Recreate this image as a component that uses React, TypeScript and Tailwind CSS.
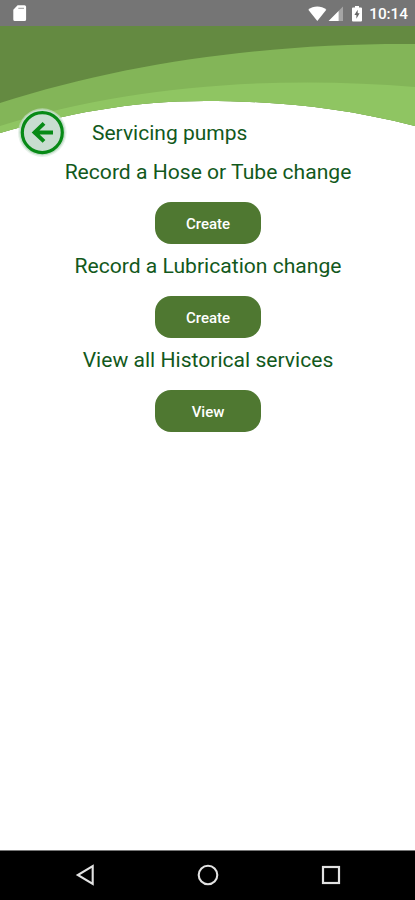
import React from "react";

interface ServiceAction {
  title: string;
  button: string;
}

const actions: ServiceAction[] = [
  { title: "Record a Hose or Tube change", button: "Create" },
  { title: "Record a Lubrication change", button: "Create" },
  { title: "View all Historical services", button: "View" },
];

const StatusBar: React.FC = () => (
  <div className="flex h-[26px] shrink-0 items-center justify-between bg-[#757575] pl-[13px] pr-[7px]">
    <svg width="14" height="18" viewBox="0 0 14 18">
      <path d="M4.6 1.2H11.5a1.6 1.6 0 0 1 1.6 1.6V15.4a1.6 1.6 0 0 1-1.6 1.6H1.9A1.6 1.6 0 0 1 .3 15.4V5.8Z" fill="#fff" />
      <path d="M5.3 4.3H11" fill="none" stroke="#9a9a9a" strokeWidth="1" />
    </svg>
    <div className="flex items-center">
      <svg className="mt-px" width="56" height="18" viewBox="0 0 56 18">
        <path d="M.3 4.7C5.3.4 13.3.4 18.3 4.7L9.3 15.9Z" fill="#fff" />
        <path d="M35 1.5V15.9H20.6Z" fill="#a5a5a5" />
        <path d="M30.6 5.9V15.9H20.6Z" fill="#fff" />
        <path d="M47 1H51V2.4H53a1 1 0 0 1 1 1V15.4a1 1 0 0 1-1 1H45a1 1 0 0 1-1-1V3.4a1 1 0 0 1 1-1H47Z" fill="#fff" />
        <path d="M49.7 4.8V8.3H51.6L48.4 13.8V10H46.4Z" fill="#666" />
      </svg>
      <span className="ml-[5px] mt-[3px] text-[15.3px] font-medium leading-none text-white">10:14</span>
    </div>
  </div>
);

const HeaderWaves: React.FC = () => (
  <svg className="block h-[108px] w-[415px] shrink-0" viewBox="0 26 415 108">
    <path d="M0 26H415V126C340 107 275 101 205 101C130 101 65 114 0 133Z" fill="#648a41" />
    <path d="M0 103C130 61 275 43 415 44V126C340 107 275 101 205 101C130 101 65 114 0 133Z" fill="#83b558" />
    <path d="M0 126C125 86 275 75 415 87V126C340 107 275 101 205 101C130 101 65 114 0 133Z" fill="#8fc562" />
  </svg>
);

const BackButton: React.FC = () => (
  <button type="button" aria-label="Back" className="block h-[50px] w-[50px]">
    <svg width="50" height="50" viewBox="0 0 50 50">
      <circle cx="25.3" cy="24.6" r="24.3" fill="#d5e8d8" opacity="0.55" />
      <circle cx="25.3" cy="24.6" r="23" fill="#c5decb" />
      <circle cx="25.3" cy="24.6" r="20" fill="#c8ddd0" stroke="#078a16" strokeWidth="3.2" />
      <path d="M36 24.4H16.5M27 15.4L17.6 24.4L27 33.4" fill="none" stroke="#078a16" strokeWidth="4" />
    </svg>
  </button>
);

const NavBar: React.FC = () => (
  <div className="flex h-[50px] shrink-0 items-center justify-between border-t border-[#777] bg-black pb-[2px] pl-[75px] pr-[74px]">
    <svg width="20" height="22" viewBox="0 0 20 22" fill="none" stroke="#e2e2e2" strokeWidth="2.1">
      <path d="M17.7 2V20L2.8 11Z" />
    </svg>
    <svg width="22" height="22" viewBox="0 0 22 22" fill="none" stroke="#e2e2e2" strokeWidth="2.1">
      <circle cx="11" cy="11" r="9.3" />
    </svg>
    <svg width="20" height="22" viewBox="0 0 20 22" fill="none" stroke="#e2e2e2" strokeWidth="2.2">
      <rect x="2" y="3" width="16" height="16" />
    </svg>
  </div>
);

export default function App() {
  return (
    <div className="flex h-[900px] w-[415px] flex-col overflow-hidden bg-white font-[Roboto,sans-serif]">
      <StatusBar />
      <HeaderWaves />
      <main className="-mt-[26px] flex flex-1 flex-col">
        <div className="flex h-[50px] items-center pl-[17px]">
          <BackButton />
          <h1 className="ml-[25px] text-[21px] leading-6 text-[#12591c]">Servicing pumps</h1>
        </div>
        <div className="flex flex-col pl-px pt-[2px]">
          {actions.map((action) => (
            <section key={action.title} className="flex h-[94px] w-full flex-col items-center">
              <h2 className="whitespace-nowrap text-[21.1px] leading-6 text-[#12591c]">{action.title}</h2>
              <button
                type="button"
                className="mt-[18px] h-[42px] w-[106px] rounded-[16px] bg-[#4f7831] pt-[2px] text-[15px] font-medium text-white"
              >
                {action.button}
              </button>
            </section>
          ))}
        </div>
      </main>
      <NavBar />
    </div>
  );
}
